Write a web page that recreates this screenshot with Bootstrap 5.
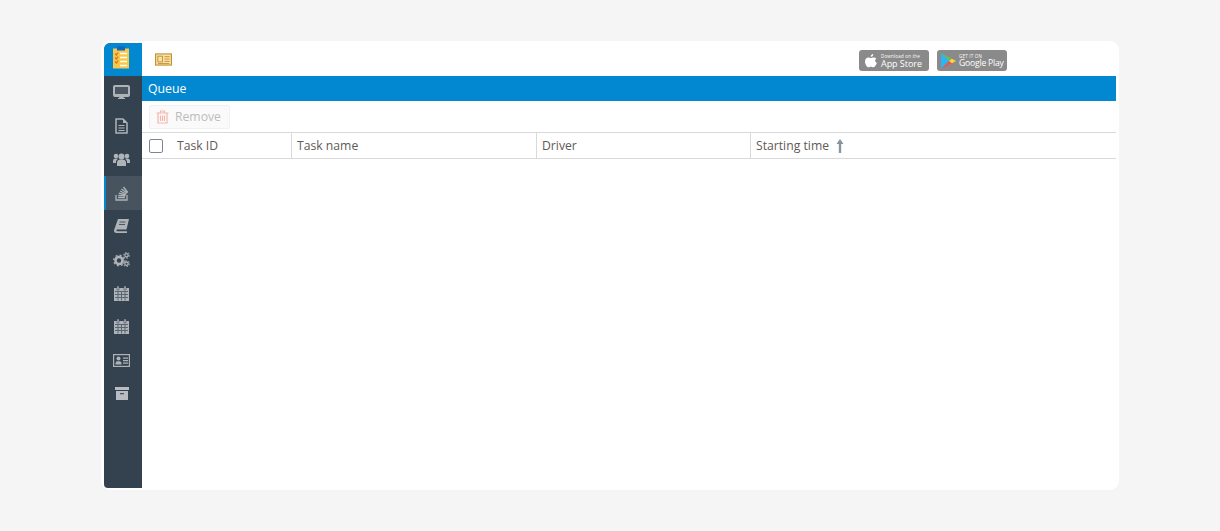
<!DOCTYPE html>
<html lang="en">
<head>
<meta charset="utf-8">
<title>Queue</title>
<link href="https://cdn.jsdelivr.net/npm/bootstrap@5.3.0/dist/css/bootstrap.min.css" rel="stylesheet">
<style>
html,body{height:100%;}
body{background:#f5f5f5;font-family:"Open Sans","Liberation Sans",sans-serif;font-size:13px;color:#555;padding:41px 101px;overflow:hidden;}
.shell{width:1018px;height:449px;background:#fff;border-radius:9px;padding:2px 3px;}
.rail{width:38px;background:#34424f;border-radius:7px 0 0 4px;flex:none;}
.rail-logo{height:33px;background:#0288d1;border-radius:6px 0 0 0;padding-right:4px;padding-bottom:4px;}
.rail-item{height:33.5px;border-left:2px solid transparent;margin:0;padding-right:5px;position:relative;top:-.5px;}
.rail-item svg{display:block;}
.rail-item.current{background:#47535f;border-left-color:#0288d1;}
.topline{height:33px;padding-left:13px;padding-right:109px;}
.storebtn{width:70px;height:21px;background:#8a8a8a;border-radius:3px;color:#fff;line-height:1;gap:4px;padding-left:6px;margin-top:2px;}
.storebtn.playbtn{padding-left:4px;gap:3px;}
.storebtn small{display:block;font-size:4.5px;letter-spacing:.2px;line-height:6px;}
.storebtn b{display:block;font-weight:400;font-size:9px;line-height:9px;white-space:nowrap;letter-spacing:-.05px;}
.storebtn.playbtn b{font-size:8.6px;letter-spacing:-.2px;}
.titlebar{height:25px;background:#0288d1;color:#fff;font-size:12.3px;padding-left:6px;padding-top:2px;}
.toolrow{height:31px;padding-left:7px;padding-top:4px;}
.removebtn{width:81px;height:24px;background:#fafafa;border:1px solid #f1f1f1;color:#bcbcbc;font-size:12.2px;gap:6px;padding:0 0 0 6px;border-radius:2px;}
.headrow{height:27px;border-top:1px solid #d9d9d9;border-bottom:1px solid #d9d9d9;color:#5f5a55;font-size:12.2px;}
.headcell{height:100%;padding-left:5px;padding-top:1px;border-right:1px solid #d9d9d9;}
.c1{width:150px;padding-left:7px;gap:14px;}
.c2{width:245px;}
.c3{width:214px;}
.c4{flex:1;border-right:0;gap:7px;}
.tick{width:14px;height:14px;border:1.5px solid #7b8794;border-radius:2px;background:#fff;flex:none;}
</style>
</head>
<body>
<div class="shell d-flex">
  <nav class="rail d-flex flex-column">
    <div class="rail-logo d-flex align-items-center justify-content-center">
      <svg width="18" height="23" viewBox="0 0 18 22"><rect x="1" y="2" width="16" height="20" fill="#f7c948"/><rect x="5" y="0" width="8" height="4" fill="#1565c0"/><g stroke="#fff" stroke-width="1.6"><path d="M8 7h7M8 11h7M8 15h7M8 19h7"/></g><g stroke="#e0762a" stroke-width="1.4" fill="none"><path d="M3 7l1.5 1.5L6 6M3 11l1.5 1.5L6 10M3 15l1.5 1.5L6 14"/></g></svg>
    </div>
    <a class="rail-item d-flex align-items-center justify-content-center"><svg width="17" height="14" viewBox="0 0 17 14"><path fill="#aeb3b8" d="M2 0h13a2 2 0 0 1 2 2v8a2 2 0 0 1-2 2h-4.500l.5 1h1v1H5v-1h1l.5-1H2a2 2 0 0 1-2-2V2a2 2 0 0 1 2-2z"/><rect x="2" y="2" width="13" height="7" fill="#4a5763"/></svg></a>
    <a class="rail-item d-flex align-items-center justify-content-center"><svg width="13" height="16" viewBox="0 0 13 16"><path fill="none" stroke="#aeb3b8" stroke-width="1.500" d="M1 1h7l4 4v10H1z"/><path fill="#aeb3b8" d="M8 1l4 4H8zM3.500 7h6v1h-6zM3.500 9.500h6v1h-6zM3.500 12h6v1h-6z"/></svg></a>
    <a class="rail-item d-flex align-items-center justify-content-center"><svg width="17" height="13" viewBox="0 0 17 13" fill="#aeb3b8"><circle cx="8.500" cy="3.500" r="3"/><circle cx="3" cy="3" r="2.300"/><circle cx="14" cy="3" r="2.300"/><path d="M4 13V9a3 3 0 0 1 3-2.500h3A3 3 0 0 1 13 9v4z"/><path d="M0 10V8a2.500 2.500 0 0 1 2.500-2.500H5L3 8v2zM17 10V8a2.500 2.500 0 0 0-2.500-2.500H12L14 8v2z"/></svg></a>
    <a class="rail-item current d-flex align-items-center justify-content-center"><svg width="14" height="16" viewBox="0 0 14 16"><path fill="none" stroke="#aeb3b8" stroke-width="1.300" d="M1 10v5h11v-5"/><g stroke="#aeb3b8" stroke-width="1.300"><path d="M3 12.500h7M3.200 10.300l7 .6M3.800 8.200l6.900 1.800M5 6l6.300 3M6.500 4l5.500 4M8.500 2l4.300 5.500"/></g></svg></a>
    <a class="rail-item d-flex align-items-center justify-content-center"><svg width="15" height="14" viewBox="0 0 15 14"><path fill="#aeb3b8" d="M4 0h11l-2.500 10.500H3a1 1 0 0 0 0 1.800h10L13 14H2.500C.8 14-.3 12.800.1 11z"/><path stroke="#4a5763" d="M5.500 3h6M5 5.500h6"/></svg></a>
    <a class="rail-item d-flex align-items-center justify-content-center"><svg width="17" height="15" viewBox="0 0 17 15"><g fill="none" stroke="#aeb3b8"><circle cx="6" cy="8.500" r="3.500" stroke-width="2.600"/><circle cx="6" cy="8.500" r="5.300" stroke-width="1.300" stroke-dasharray="2 2.150"/><circle cx="13.500" cy="3.300" r="1.700" stroke-width="1.300"/><circle cx="13.500" cy="3.300" r="3" stroke-width="1" stroke-dasharray="1.500 1.600"/><circle cx="13.500" cy="11.700" r="1.700" stroke-width="1.300"/><circle cx="13.500" cy="11.700" r="3" stroke-width="1" stroke-dasharray="1.500 1.600"/></g></svg></a>
    <a class="rail-item d-flex align-items-center justify-content-center"><svg width="15" height="15" viewBox="0 0 15 15"><use href="#cal"/></svg></a>
    <a class="rail-item d-flex align-items-center justify-content-center"><svg width="15" height="15" viewBox="0 0 15 15"><use href="#cal"/></svg></a>
    <a class="rail-item d-flex align-items-center justify-content-center"><svg width="17" height="13" viewBox="0 0 17 13"><rect x=".6" y=".6" width="15.800" height="11.800" fill="none" stroke="#aeb3b8" stroke-width="1.200"/><circle cx="5.500" cy="4.500" r="2" fill="#aeb3b8"/><path fill="#aeb3b8" d="M2.500 10.500V9a2 2 0 0 1 2-1.800h2A2 2 0 0 1 8.500 9v1.500zM10 3.500h5v1.200h-5zM10 6h5v1.200h-5zM10 8.500h5v1.200h-5z"/></svg></a>
    <a class="rail-item d-flex align-items-center justify-content-center"><svg width="14" height="13" viewBox="0 0 14 13"><path fill="#b9bdc1" d="M0 0h14v3H0zM1 4h12v9H1z"/><rect x="5" y="6" width="4" height="1.300" fill="#4a5763"/></svg></a>
  </nav>
  <main class="flex-grow-1 d-flex flex-column">
    <header class="topline d-flex align-items-center justify-content-between">
      <svg width="17" height="13" viewBox="0 0 18 13"><rect x=".6" y=".6" width="16.800" height="11.800" fill="#f6e3b4" stroke="#c8922a" stroke-width="1.200"/><rect x="3" y="3" width="5" height="6" fill="none" stroke="#c8922a"/><path stroke="#c8922a" d="M10 3.500h5.500M10 6h5.500M10 8.500h5.500M3 10.800h12"/></svg>
      <div class="d-flex gap-2">
        <div class="storebtn d-flex align-items-center">
          <svg width="12" height="14" viewBox="0 0 12 14"><path fill="#fff" d="M8.300 0c.1 1.400-1.100 2.900-2.600 2.800C5.500 1.500 6.900.1 8.300 0zM11.300 4.500c-1.700 1-1.500 3.600.5 4.500-.6 1.800-2 4.300-3.500 4.300-.9 0-1.300-.6-2.400-.6s-1.500.6-2.400.6C1.900 13.300 0 10 0 7.400 0 4.800 1.700 3.400 3.300 3.400c1 0 1.900.7 2.500.7s1.700-.8 2.900-.7c.7 0 1.800.3 2.600 1.100z"/></svg>
          <span><small>Download on the</small><b>App Store</b></span>
        </div>
        <div class="storebtn playbtn d-flex align-items-center">
          <svg width="15" height="16" viewBox="0 0 13 14"><path fill="#29b6f6" d="M0 0l7 7-7 7z"/><path fill="#66bb6a" d="M0 0l9.500 5L7 7z"/><path fill="#ef5350" d="M0 14l9.500-5L7 7z"/><path fill="#fdd835" d="M9.500 5L13 7l-3.500 2L7 7z"/></svg>
          <span><small>GET IT ON</small><b>Google Play</b></span>
        </div>
      </div>
    </header>
    <div class="titlebar d-flex align-items-center">Queue</div>
    <div class="toolrow">
      <button type="button" class="removebtn d-flex align-items-center" disabled>
        <svg width="13" height="14" viewBox="0 0 13 14"><path fill="none" stroke="#f6b6ad" stroke-width="1.200" d="M2 3.500V13h9V3.500M.5 3h12M4.500 3V1h4v2M4.500 5.500V11M6.500 5.500V11M8.500 5.500V11"/></svg>
        <span>Remove</span>
      </button>
    </div>
    <div class="headrow d-flex">
      <div class="headcell c1 d-flex align-items-center"><span class="tick"></span><span>Task ID</span></div>
      <div class="headcell c2 d-flex align-items-center">Task name</div>
      <div class="headcell c3 d-flex align-items-center">Driver</div>
      <div class="headcell c4 d-flex align-items-center"><span>Starting time</span>
        <svg width="8" height="14" viewBox="0 0 8 14"><path fill="#8a949c" d="M4 0l3.500 5H5.200v9H2.800V5H.5z"/></svg>
      </div>
    </div>
  </main>
</div>
<svg width="0" height="0" class="d-block" aria-hidden="true"><defs><g id="cal"><path fill="#aeb3b8" d="M0 2h15v13H0z"/><rect x="3" y="0" width="2" height="4" fill="#aeb3b8" stroke="#34424f" stroke-width=".5"/><rect x="10" y="0" width="2" height="4" fill="#aeb3b8" stroke="#34424f" stroke-width=".5"/><g stroke="#5a6671" stroke-width="1"><path d="M1 5.500h13M1 8.500h13M1 11.500h13M4 5v9.500M7.500 5v9.500M11 5v9.500"/></g></g></defs></svg>
<script src="https://cdn.jsdelivr.net/npm/bootstrap@5.3.0/dist/js/bootstrap.bundle.min.js"></script>
</body>
</html>
